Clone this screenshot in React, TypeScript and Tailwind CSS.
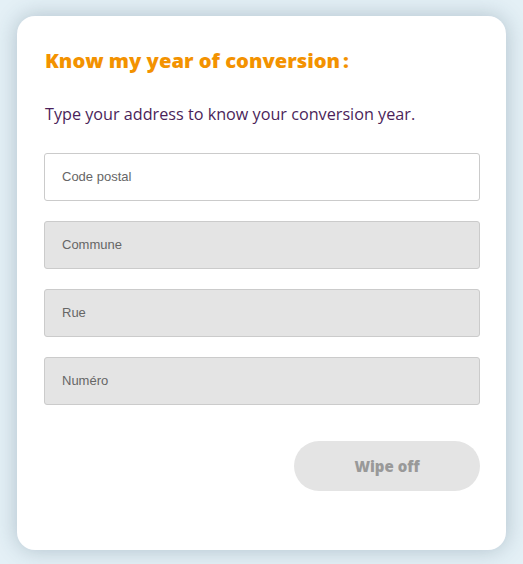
import React from "react";

export default function App() {
  const fields = [
    { label: "Code postal", disabled: false },
    { label: "Commune", disabled: true },
    { label: "Rue", disabled: true },
    { label: "Numéro", disabled: true },
  ];
  return (
    <div className="min-h-[564px] w-full bg-[#e4f0f6] pl-[17px] pr-[17px] pt-[16px] pb-[14px]">
      <div className="w-[489px] h-[534px] rounded-[18px] bg-white shadow-[0_0_22px_rgba(40,70,90,0.28)] px-[28px] pt-[30px]">
        <h1 className="text-[#f39200] font-extrabold text-[20.2px] leading-[28px] font-['Open_Sans',sans-serif]">
          Know my year of conversion<span className="ml-[3px]">:</span>
        </h1>
        <p className="mt-[29px] text-[#4b1f5a] text-[16.2px] leading-[22px] font-['Open_Sans',sans-serif]">
          Type your address to know your conversion year.
        </p>
        <div className="mt-[28px] flex flex-col gap-[20px]">
          {fields.map((f) => (
            <div
              key={f.label}
              className={
                "h-[48px] w-[436px] -ml-[1px] rounded-[3px] border border-[#cbcbcb] flex items-center pl-[17px] text-[13px] text-[#666] font-['Liberation_Sans',Arial,sans-serif] " +
                (f.disabled ? "bg-[#e4e4e4]" : "bg-white")
              }
            >
              {f.label}
            </div>
          ))}
        </div>
        <div className="mt-[36px] flex justify-end">
          <button className="h-[50px] w-[186px] mr-[-2px] rounded-full bg-[#e4e4e4] text-[#999] font-extrabold text-[15px] font-['Open_Sans',sans-serif]">
            Wipe off
          </button>
        </div>
      </div>
    </div>
  );
}
